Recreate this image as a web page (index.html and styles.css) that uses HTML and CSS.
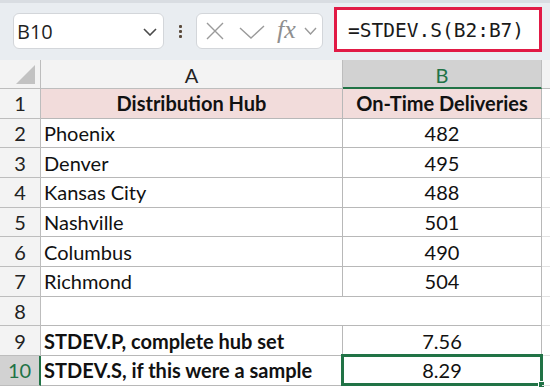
FILE: index.html
```html
<!DOCTYPE html>
<html>
<head>
<meta charset="utf-8">
<link rel="stylesheet" href="styles.css">
</head>
<body>
<div class="app">
  <div class="toolbar">
    <div class="namebox">
      <span class="name">B10</span>
      <svg class="chev" width="14" height="8" viewBox="0 0 14 8"><path d="M1 1 L7 7 L13 1" fill="none" stroke="#4a4a4a" stroke-width="1.6"/></svg>
    </div>
    <div class="dots"><span></span><span></span><span></span></div>
    <div class="fbtns">
      <svg class="ico-x" width="18" height="18" viewBox="0 0 18 18"><path d="M1 1 L17 17 M17 1 L1 17" stroke="#9a9a9a" stroke-width="1.4" fill="none"/></svg>
      <svg class="ico-check" width="26" height="14" viewBox="0 0 26 14"><path d="M1 3 L12 13 L25 1" stroke="#9a9a9a" stroke-width="1.4" fill="none"/></svg>
      <span class="fx">fx</span>
      <svg class="chev2" width="13" height="8" viewBox="0 0 13 8"><path d="M1 1 L6.5 7 L12 1" fill="none" stroke="#9a9a9a" stroke-width="1.4"/></svg>
    </div>
    <div class="formula">=STDEV.S(B2:B7)</div>
  </div>
  <div class="sheet">
    <div class="corner"><div class="tri"></div></div>
    <div class="colhead">A</div>
    <div class="colhead sel">B</div>
    <div class="colhead extra"></div>

    <div class="rowhead">1</div>
    <div class="cell hdr">Distribution Hub</div>
    <div class="cell hdr">On-Time Deliveries</div>
    <div class="cell extra"></div>

    <div class="rowhead">2</div>
    <div class="cell">Phoenix</div>
    <div class="cell num">482</div>
    <div class="cell extra"></div>

    <div class="rowhead">3</div>
    <div class="cell">Denver</div>
    <div class="cell num">495</div>
    <div class="cell extra"></div>

    <div class="rowhead">4</div>
    <div class="cell">Kansas City</div>
    <div class="cell num">488</div>
    <div class="cell extra"></div>

    <div class="rowhead">5</div>
    <div class="cell">Nashville</div>
    <div class="cell num">501</div>
    <div class="cell extra"></div>

    <div class="rowhead">6</div>
    <div class="cell">Columbus</div>
    <div class="cell num">490</div>
    <div class="cell extra"></div>

    <div class="rowhead">7</div>
    <div class="cell">Richmond</div>
    <div class="cell num">504</div>
    <div class="cell extra"></div>

    <div class="rowhead">8</div>
    <div class="cell span2"></div>
    <div class="cell extra"></div>

    <div class="rowhead">9</div>
    <div class="cell bold">STDEV.P, complete hub set</div>
    <div class="cell num">7.56</div>
    <div class="cell extra"></div>

    <div class="rowhead selrow">10</div>
    <div class="cell bold">STDEV.S, if this were a sample</div>
    <div class="cell num active">8.29<span class="handle"></span></div>
    <div class="cell extra"></div>
  </div>
</div>
</body>
</html>
```

FILE: styles.css
```css
* { box-sizing: border-box; }
html, body { margin: 0; padding: 0; }
body { width: 550px; height: 388px; overflow: hidden; background: #fff; }

.app { width: 550px; height: 388px; display: flex; flex-direction: column; }

.toolbar {
  height: 60px;
  flex: none;
  background: #e9edf1;
  border-top: 3px solid #d9dde2;
  display: flex;
  align-items: flex-start;
  position: relative;
}

.namebox {
  margin: 10px 0 0 13px;
  width: 151px;
  height: 36px;
  background: #fff;
  border: 1px solid #d3d6da;
  border-radius: 6px;
  display: flex;
  align-items: center;
  justify-content: space-between;
  padding: 0 6px 0 3px;
}
.name { font-family: "Open Sans", sans-serif; font-size: 20px; color: #1f1f1f; }
.chev { margin-top: 2px; }

.dots {
  width: 32px;
  height: 36px;
  margin-top: 10px;
  display: flex;
  flex-direction: column;
  align-items: center;
  justify-content: center;
  gap: 2px;
}
.dots span { width: 3px; height: 3px; background: #5b4b3c; border-radius: 1px; }

.fbtns {
  margin-top: 10px;
  width: 127px;
  height: 36px;
  background: #fff;
  border: 1px solid #d3d6da;
  border-radius: 6px;
  display: flex;
  align-items: center;
  padding-left: 9px;
}
.ico-x { margin-right: 15px; }
.ico-check { margin-right: 12px; margin-top: 1px; }
.fx {
  font-family: "Liberation Serif", serif;
  font-style: italic;
  font-size: 26px;
  color: #8f8f8f;
  margin-right: 8px;
  margin-top: -3px;
}

.formula {
  margin: 4px 0 0 11px;
  width: 208px;
  height: 45px;
  background: #fff;
  border: 3px solid #e11a45;
  font-family: "DejaVu Sans Mono", monospace;
  font-size: 19.5px;
  color: #1a1a1a;
  padding: 9px 0 0 11px;
  line-height: 24px;
  white-space: nowrap;
}

.sheet {
  flex: 1;
  display: grid;
  grid-template-columns: 41px 302px 199px 8px;
  grid-template-rows: 29px repeat(10, 29.67px);
  font-family: Lato, sans-serif;
  font-size: 20px;
  color: #111;
  overflow: hidden;
}

.corner {
  background: #f3f3f3;
  border-right: 1px solid #bdbdbd;
  border-bottom: 1px solid #bdbdbd;
  position: relative;
}
.tri {
  position: absolute;
  right: 5px;
  bottom: 4px;
  width: 0; height: 0;
  border-left: 19px solid transparent;
  border-bottom: 19px solid #c2c2c2;
}

.colhead {
  background: #f3f3f3;
  border-right: 1px solid #bdbdbd;
  border-bottom: 1px solid #bdbdbd;
  display: flex;
  align-items: center;
  justify-content: center;
  color: #222;
  padding-top: 2px;
}
.colhead.sel {
  background: #d2d2d2;
  color: #217346;
  border-bottom: 2px solid #217346;
}
.colhead.extra { border-right: none; }

.rowhead {
  background: #f3f3f3;
  border-right: 1px solid #bdbdbd;
  border-bottom: 1px solid #bdbdbd;
  display: flex;
  align-items: center;
  justify-content: center;
  color: #222;
}
.rowhead.selrow {
  background: #d2d2d2;
  color: #217346;
  border-right: 2px solid #217346;
}

.cell {
  border-right: 1px solid #b8b8b8;
  border-bottom: 1px solid #b8b8b8;
  display: flex;
  align-items: center;
  padding-left: 3px;
  white-space: nowrap;
  position: relative;
}
.cell.hdr {
  background: #f2dcdb;
  font-weight: bold;
  justify-content: center;
  padding-left: 0;
}
.cell.num { justify-content: center; padding-left: 0; }
.cell.bold { font-weight: bold; }
.cell.span2 { grid-column: span 2; }
.cell.extra { border-right: none; border-bottom: 1px solid #e2e2e2; }

.cell.active {
  border: 3px solid #217346;
  margin: -2px -1px 0 -2px;
}
.handle {
  position: absolute;
  right: -5px;
  bottom: -5px;
  width: 7px;
  height: 7px;
  background: #217346;
  border: 1px solid #fff;
}
```
